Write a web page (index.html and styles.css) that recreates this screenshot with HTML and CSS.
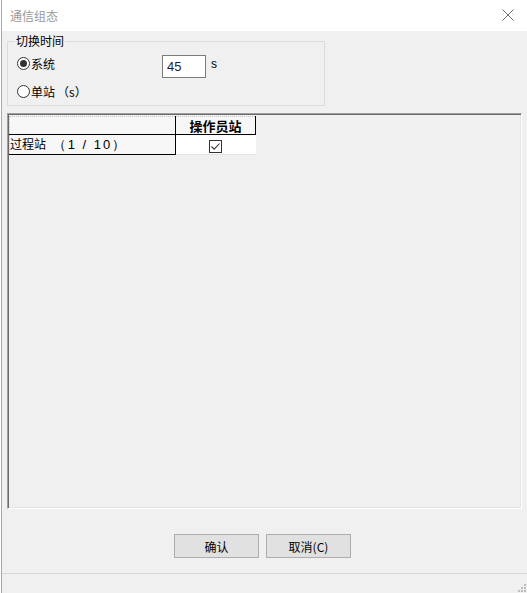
FILE: index.html
```html
<!DOCTYPE html>
<html>
<head>
<meta charset="utf-8">
<title>通信组态</title>
<link rel="stylesheet" href="styles.css">
</head>
<body>
<div class="window">
  <div class="titlebar">
    <span class="title">通信组态</span>
    <svg class="close" width="12" height="12" viewBox="0 0 12 12"><path d="M0.5 0.5L11.5 11.5M11.5 0.5L0.5 11.5" stroke="#6e6e6e" stroke-width="1" fill="none"/></svg>
  </div>

  <div class="content">
    <fieldset class="group">
      <legend>切换时间</legend>
      <div class="opt-row">
        <label class="radio"><span class="dot checked"></span>系统</label>
        <input class="num" type="text" value="45">
        <span class="unit">s</span>
      </div>
      <div class="opt-row second">
        <label class="radio"><span class="dot"></span>单站<span class="paren">（s）</span></label>
      </div>
    </fieldset>

    <div class="grid-panel">
      <table class="grid">
        <tr class="head">
          <th class="corner"></th>
          <th class="colhead">操作员站</th>
        </tr>
        <tr>
          <td class="rowhead">过程站 <span class="count">（1 / 10）</span></td>
          <td class="cell"><span class="check"><svg width="11" height="11" viewBox="0 0 11 11"><path d="M1.5 5.5L4.2 8.2L9.5 2.5" stroke="#333" stroke-width="1.1" fill="none"/></svg></span></td>
        </tr>
      </table>
    </div>

    <div class="buttons">
      <button class="btn">确认</button>
      <button class="btn">取消(C)</button>
    </div>
  </div>

  <div class="statusbar">
    <svg class="grip" width="10" height="10" viewBox="0 0 10 10">
      <rect x="8" y="2" width="2" height="2" fill="#bdbdbd"/>
      <rect x="5" y="5" width="2" height="2" fill="#bdbdbd"/>
      <rect x="8" y="5" width="2" height="2" fill="#bdbdbd"/>
      <rect x="2" y="8" width="2" height="2" fill="#bdbdbd"/>
      <rect x="5" y="8" width="2" height="2" fill="#bdbdbd"/>
      <rect x="8" y="8" width="2" height="2" fill="#bdbdbd"/>
    </svg>
  </div>
</div>
</body>
</html>
```

FILE: styles.css
```css
/* Dialog: communication configuration */

html, body
{ margin: 0;
padding: 0;
background: #fff;
}

body
{ font-family: "Noto Sans CJK SC", "Liberation Sans", sans-serif;
font-size: 12px;
color: #000;
}

div.window
{ width: 526px;
height: 593px;
margin-left: 1px;
border-left: 1px solid #a8a8a8;
display: flex;
flex-direction: column;
box-sizing: border-box;
}

div.titlebar
{ height: 30px;
flex: none;
background: #fff;
display: flex;
align-items: center;
justify-content: space-between;
padding: 0 13px 1px 8px;
}

span.title
{ color: #9a9a9a;
font-size: 12px;
}

div.content
{ flex: 1;
background: #f0f0f0;
display: flex;
flex-direction: column;
padding: 3px 4px 0 5px;
}

/* Group box */

fieldset.group
{ width: 318px;
height: 72px;
box-sizing: border-box;
margin: 0;
padding: 0 0 0 9px;
border: 1px solid #dcdcdc;
}

fieldset.group legend
{ padding: 0 1px;
margin-left: -2px;
line-height: 14px;
}

div.opt-row
{ display: flex;
align-items: center;
height: 23px;
margin-top: 4px;
}

div.opt-row.second
{ margin-top: 5px;
}

label.radio
{ display: flex;
align-items: center;
width: 145px;
}

span.dot
{ width: 11px;
height: 11px;
border: 1px solid #333;
border-radius: 50%;
background: #fff;
margin-right: 1px;
box-sizing: content-box;
display: flex;
align-items: center;
justify-content: center;
}

span.dot.checked::after
{ content: "";
width: 7px;
height: 7px;
border-radius: 50%;
background: #333;
}

span.paren
{ margin-left: 2px;
}

input.num
{ width: 44px;
height: 23px;
align-self: flex-start;
margin-top: 3px;
box-sizing: border-box;
border: 1px solid #7a7a7a;
padding: 0 4px;
font-family: "Liberation Sans", sans-serif;
font-size: 13px;
color: #1a1a40;
background: #fff;
outline: none;
}

span.unit
{ align-self: flex-start;
font-family: "Liberation Sans", sans-serif;
font-size: 12px;
margin: 5px 0 0 5px;
}

/* Grid */

div.grid-panel
{ margin-top: 7px;
width: 515px;
height: 396px;
box-sizing: border-box;
border-top: 1px solid #a0a0a0;
border-left: 1px solid #a0a0a0;
border-right: 1px solid #fff;
border-bottom: 1px solid #fff;
box-shadow: inset 1px 1px 0 #696969, inset -1px -1px 0 #e3e3e3;
padding: 2px 0 0 1px;
}

table.grid
{ border-collapse: collapse;
border-spacing: 0;
}

table.grid th, table.grid td
{ padding: 0;
}

tr.head th
{ height: 17px;
line-height: 16px;
background: #f7f7f7;
border-top: 1px dotted #c8c8c8;
border-bottom: 1px solid #000;
border-right: 1px solid #000;
}

th.corner
{ width: 165px;
border-left: 1px dotted #c8c8c8;
}

th.colhead
{ width: 79px;
font-weight: bold;
font-size: 13px;
text-align: center;
}

td.rowhead
{ height: 19px;
line-height: 18px;
background: #f7f7f7;
border-left: 1px dotted #c8c8c8;
border-right: 1px solid #000;
border-bottom: 1px solid #000;
padding-left: 1px;
white-space: nowrap;
}

span.count
{ margin-left: 4px;
font-family: "Liberation Sans", sans-serif;
font-size: 13px;
letter-spacing: 2px;
}

td.cell
{ background: #fff;
text-align: center;
border-bottom: 1px solid #e3e3e3;
}

span.check
{ display: inline-flex;
width: 11px;
height: 11px;
border: 1px solid #333;
vertical-align: middle;
}

/* Buttons */

div.buttons
{ display: flex;
justify-content: center;
gap: 7px;
margin-top: 25px;
padding-right: 5px;
}

button.btn
{ width: 85px;
height: 24px;
background: #e1e1e1;
border: 1px solid #adadad;
font-family: "Noto Sans CJK SC", "Liberation Sans", sans-serif;
font-size: 12px;
color: #000;
padding: 0;
}

/* Status bar */

div.statusbar
{ height: 18px;
flex: none;
background: #f0f0f0;
border-top: 1px solid #d7d7d7;
display: flex;
justify-content: flex-end;
align-items: flex-end;
padding: 0 1px 1px 0;
}
```
